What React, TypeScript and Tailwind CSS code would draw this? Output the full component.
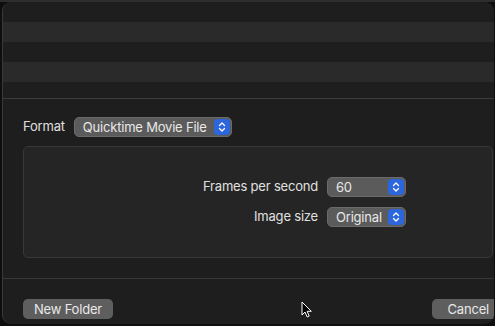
import React from "react";

function Stepper() {
  return (
    <span className="flex h-[16px] w-[16px] items-center justify-center rounded-[4px] bg-[#2c66dd]">
      <svg width="8" height="12" viewBox="0 0 8 12" fill="none">
        <path d="M1.5 4.5 L4 2 L6.5 4.5" stroke="#fff" strokeWidth="1.3" strokeLinecap="round" strokeLinejoin="round" />
        <path d="M1.5 7.5 L4 10 L6.5 7.5" stroke="#fff" strokeWidth="1.3" strokeLinecap="round" strokeLinejoin="round" />
      </svg>
    </span>
  );
}

function PopUp({ label, width }: { label: string; width: string }) {
  return (
    <div className={`flex h-[20px] ${width} items-center justify-between rounded-[5px] border border-[#6a6a6a] bg-[#5b5b5b] pl-[8px] pr-[1px]`}>
      <span className="text-[13px] leading-none tracking-[-0.2px] text-[#e8e8e8]">{label}</span>
      <Stepper />
    </div>
  );
}

export default function App() {
  const stripes = ["bg-[#1e1e1e]", "bg-[#2a2a2a]", "bg-[#1e1e1e]", "bg-[#2a2a2a]"];
  return (
    <div className="h-[326px] w-[495px] overflow-hidden bg-[#0e0e0e]" style={{ fontFamily: "Inter, 'Noto Sans', sans-serif" }}>
      <div className="h-[2px] w-full bg-[#2d2d2d]" />
      <div className="ml-[2px] flex h-[322px] w-[492px] flex-col overflow-hidden rounded-[9px] border-l border-[#3a3a3a] bg-[#1e1e1e]">
        {/* file list stripes */}
        {stripes.map((c, i) => (
          <div key={i} className={`h-[20px] shrink-0 ${c}`} />
        ))}
        <div className="h-[17px] shrink-0 border-b border-[#3c3c3c] bg-[#1e1e1e]" />

        {/* format row */}
        <div className="flex items-center gap-[9px] pl-[20px] pt-[18px]">
          <span className="text-[13px] tracking-[-0.2px] text-[#e0e0e0]">Format</span>
          <PopUp label="Quicktime Movie File" width="w-[158px]" />
        </div>

        {/* options box */}
        <div className="ml-[20px] mt-[9px] h-[112px] w-[470px] shrink-0 rounded-[5px] border border-[#383838] bg-[#252525] pt-[30px]">
          <div className="grid grid-cols-[294px_auto] items-center gap-x-[9px] gap-y-[10px]">
            <span className="text-right text-[13px] tracking-[-0.2px] text-[#e0e0e0]">Frames per second</span>
            <PopUp label="60" width="w-[79px]" />
            <span className="text-right text-[13px] tracking-[-0.2px] text-[#e0e0e0]">Image size</span>
            <PopUp label="Original" width="w-[79px]" />
          </div>
        </div>

        <div className="mt-[20px] h-px shrink-0 bg-[#383838]" />

        {/* buttons */}
        <div className="relative flex items-center justify-between pl-[20px] pt-[20px]">
          <button className="h-[20px] w-[90px] rounded-[5px] bg-[#5e5e5e] text-[13px] leading-none tracking-[-0.2px] text-[#e8e8e8]">
            New Folder
          </button>
          <button className="mr-[-16px] h-[20px] w-[78px] rounded-[5px] bg-[#5e5e5e] pr-[21px] text-right text-[13px] leading-none tracking-[-0.2px] text-[#e8e8e8]">
            Cancel
          </button>
          <svg className="absolute left-[298px] top-[22px]" width="12" height="18" viewBox="0 0 12 18">
            <path d="M1 1 L1 14 L4 11 L6.2 16 L8.2 15.1 L6.1 10.3 L10.3 10.3 Z" fill="#000" stroke="#fff" strokeWidth="1" strokeLinejoin="round" />
          </svg>
        </div>
      </div>
    </div>
  );
}
